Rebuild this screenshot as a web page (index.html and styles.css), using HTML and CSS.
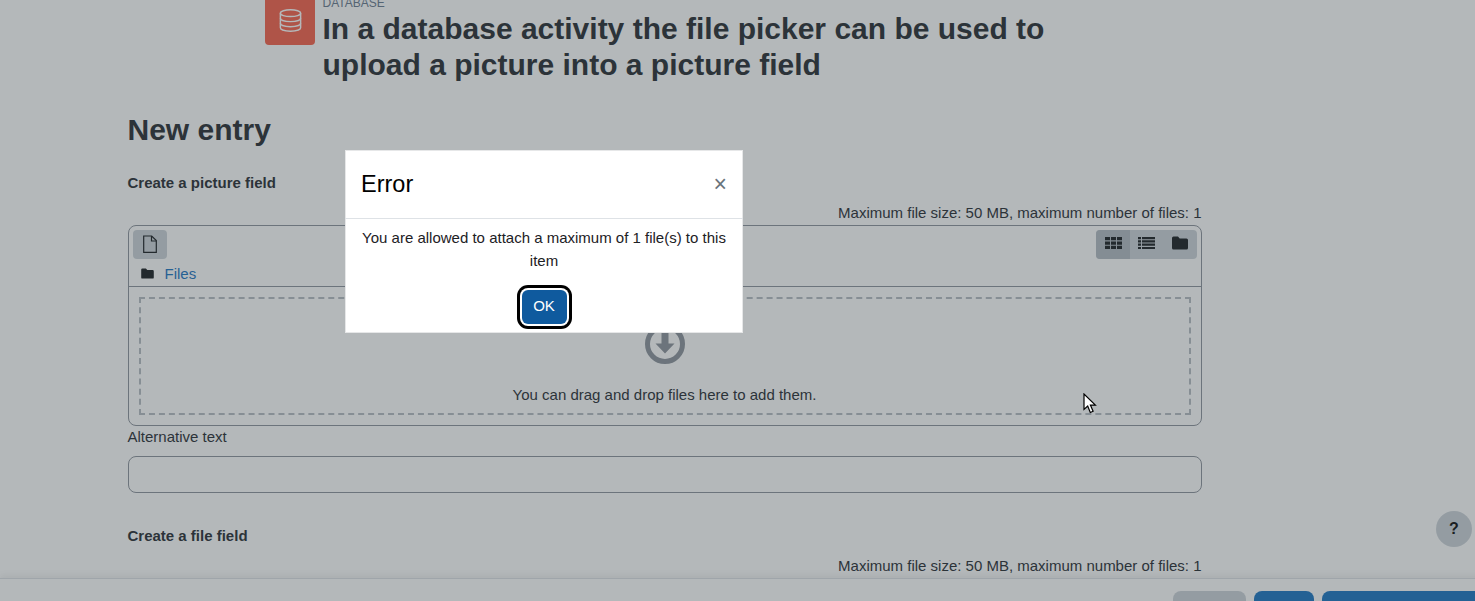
FILE: index.html
```html
<!DOCTYPE html>
<html lang="en">
<head>
    <meta charset="UTF-8">
    <title>New entry</title>
    <link rel="stylesheet" href="styles.css">
</head>
<body>

    <div class="pagina">
        <!-- Cabecera de la actividad -->
        <div class="cabecera">
            <div class="icono-actividad">
                <svg width="27" height="27" viewBox="0 0 24 24" fill="none" stroke="#fff" stroke-width="1.3">
                    <ellipse cx="12" cy="5.5" rx="9" ry="3"/>
                    <path d="M3 5.5v13c0 1.7 4 3 9 3s9-1.3 9-3v-13"/>
                    <path d="M3 10c0 1.7 4 3 9 3s9-1.3 9-3"/>
                    <path d="M3 14.5c0 1.7 4 3 9 3s9-1.3 9-3"/>
                </svg>
            </div>
            <div>
                <div class="tipo-actividad">DATABASE</div>
                <h1>In a database activity the file picker can be used to upload a picture into a picture field</h1>
            </div>
        </div>

        <h2>New entry</h2>

        <div class="campo-titulo">Create a picture field</div>
        <div class="limite">Maximum file size: 50 MB, maximum number of files: 1</div>

        <div class="gestor">
            <div class="barra">
                <button class="boton-gris">
                    <svg width="16" height="18" viewBox="0 0 16 18" fill="none" stroke="#1d2125" stroke-width="1.2">
                        <path d="M1.7 1h8l4.6 4.6v11.700h-12.600z"/>
                        <path d="M9.500 1v5h4.800"/>
                    </svg>
                </button>
                <div class="vistas">
                    <button class="vista activa">
                        <svg width="17" height="14" viewBox="0 0 17 14" fill="#1d2125">
                            <path d="M0 1h5v3.300h-5zM6 1h5v3.300h-5zM12 1h5v3.300h-5zM0 5.400h5v3.300h-5zM6 5.400h5v3.300h-5zM12 5.400h5v3.300h-5zM0 9.800h5v3.300h-5zM6 9.800h5v3.300h-5zM12 9.800h5v3.300h-5z"/>
                        </svg>
                    </button>
                    <button class="vista">
                        <svg width="17" height="14" viewBox="0 0 17 14" fill="#1d2125">
                            <path d="M0 1h3v2.200h-3zM4 1h13v2.200h-13zM0 4.300h3v2.200h-3zM4 4.300h13v2.200h-13zM0 7.600h3v2.200h-3zM4 7.600h13v2.200h-13zM0 10.900h3v2.200h-3zM4 10.900h13v2.200h-13z"/>
                        </svg>
                    </button>
                    <button class="vista">
                        <svg width="16" height="14" viewBox="0 0 16 14" fill="#1d2125">
                            <path d="M1.500 0.500h4.500l1.700 2h6.800q1.500 0 1.500 1.500v8q0 1.500-1.500 1.500h-13q-1.500 0-1.500-1.500v-10q0-1.500 1.500-1.500z"/>
                        </svg>
                    </button>
                </div>
            </div>
            <div class="ruta">
                <svg width="13" height="11" viewBox="0 0 16 14" fill="#1d2125">
                    <path d="M1.500 0.500h4.500l1.700 2h6.800q1.500 0 1.500 1.500v8q0 1.500-1.500 1.500h-13q-1.500 0-1.500-1.500v-10q0-1.500 1.500-1.500z"/>
                </svg>
                <a href="#">Files</a>
            </div>
            <div class="zona-soltar">
                <svg width="40" height="40" viewBox="0 0 40 40">
                    <circle cx="20" cy="20" r="17.500" fill="none" stroke="#8f959e" stroke-width="5"/>
                    <path d="M16.500 9h7v10.500h6l-9.500 10-9.500-10h6z" fill="#8f959e"/>
                </svg>
                <div>You can drag and drop files here to add them.</div>
            </div>
        </div>

        <label class="etiqueta">Alternative text</label>
        <input class="entrada" type="text">

        <div class="campo-titulo segundo">Create a file field</div>
        <div class="limite">Maximum file size: 50 MB, maximum number of files: 1</div>
    </div>

    <!-- Pie fijo con los botones -->
    <div class="pie">
        <span class="boton-pie cancelar"></span>
        <span class="boton-pie guardar"></span>
        <span class="boton-pie guardar-ver"></span>
    </div>

    <button class="ayuda">?</button>

    <div class="fondo-modal"></div>

    <!-- Ventana de error -->
    <div class="modal">
        <div class="modal-cabecera">
            <span class="modal-titulo">Error</span>
            <span class="cerrar">×</span>
        </div>
        <div class="modal-cuerpo">
            <p>You are allowed to attach a maximum of 1 file(s) to this item</p>
            <button class="boton-ok">OK</button>
        </div>
    </div>

    <svg class="cursor" width="14" height="21" viewBox="0 0 14 21">
        <path d="M1 1v15.500l3.700-3.400 2.600 6.400 2.800-1.200-2.700-6.200h5z" fill="#fff" stroke="#000" stroke-width="1.200"/>
    </svg>

</body>
</html>
```

FILE: styles.css
```css
html, body {
    height: 100%;
    overflow: hidden;
}
body {
    margin: 0;
    font-family: "Liberation Sans", Arial, sans-serif;
    font-size: 15px;
    line-height: 23px;
    color: #2b3036;
    background-color: white;
}
button {
    font-family: inherit;
    border: none;
    cursor: pointer;
}
.pagina {
    width: 1074px;
    margin-left: 127.5px;
    margin-top: -5px;
}
.cabecera {
    display: flex;
    gap: 7.5px;
    margin-left: 137.5px;
    width: 800px;
}
.icono-actividad {
    flex: none;
    width: 50px;
    height: 50px;
    background-color: #f7634d;
    border-radius: 4px;
    display: flex;
    justify-content: center;
    align-items: center;
}
.tipo-actividad {
    font-size: 12px;
    line-height: 16px;
    color: #6b7c90;
}
h1 {
    margin: 0;
    font-size: 30px;
    line-height: 36px;
}
h2 {
    margin: 29px 0 0 0;
    font-size: 30px;
    line-height: 36px;
}
.campo-titulo {
    font-weight: bold;
    margin-top: 23px;
}
.campo-titulo.segundo {
    margin-top: 31px;
}
.limite {
    text-align: right;
    margin-top: 7px;
}
.gestor {
    box-sizing: border-box;
    height: 201px;
    margin-top: 1px;
    border: 1px solid #8f959e;
    border-radius: 8px;
    display: flex;
    flex-direction: column;
}
.barra {
    display: flex;
    justify-content: space-between;
    padding: 4px 4px 0 4px;
}
.boton-gris {
    width: 34px;
    height: 29px;
    background-color: #ced4da;
    border-radius: 4px;
    padding: 0 0 2px 0;
    display: flex;
    justify-content: center;
    align-items: center;
}
.vistas {
    display: flex;
    background-color: #ced4da;
    border-radius: 4px;
    overflow: hidden;
    height: 29px;
}
.vista {
    width: 33.4px;
    padding: 0 0 4px 0;
    background: none;
    display: flex;
    justify-content: center;
    align-items: center;
}
.vista.activa {
    background-color: #b5bcc4;
}
.ruta {
    box-sizing: border-box;
    display: flex;
    align-items: center;
    gap: 11px;
    height: 28px;
    padding: 2px 0 0 12px;
    border-bottom: 1px solid #8f959e;
}
a {
    color: #1f77c4;
    text-decoration: none;
}
.zona-soltar {
    box-sizing: border-box;
    height: 118px;
    margin: 10px 10px 0 10px;
    border: 2px dashed #b8bdc4;
    display: flex;
    flex-direction: column;
    align-items: center;
    padding-top: 25px;
    gap: 19px;
}
.zona-soltar svg {
    display: block;
}
.etiqueta {
    display: block;
    line-height: 21px;
}
.entrada {
    display: block;
    box-sizing: border-box;
    width: 100%;
    height: 37px;
    margin-top: 9px;
    border: 1px solid #8f959e;
    border-radius: 8px;
    background: white;
}
.pie {
    position: fixed;
    left: 0;
    right: -60px;
    bottom: 0;
    height: 23px;
    box-sizing: border-box;
    padding-top: 12px;
    background-color: white;
    border-top: 1px solid #dee2e6;
    box-shadow: 0 -3px 6px rgba(0, 0, 0, 0.06);
    display: flex;
    justify-content: flex-end;
    gap: 8px;
}
.boton-pie {
    height: 30px;
    border-radius: 8px;
}
.cancelar {
    width: 73px;
    background-color: #ced4da;
}
.guardar {
    width: 60px;
    background-color: #1f77c4;
}
.guardar-ver {
    width: 213px;
    background-color: #1f77c4;
}
.ayuda {
    position: fixed;
    left: 1436px;
    top: 511px;
    width: 36px;
    height: 36px;
    padding: 0;
    border-radius: 50%;
    background-color: #ced4da;
    color: #111;
    font-size: 16px;
    font-weight: bold;
}
.fondo-modal {
    position: fixed;
    inset: 0;
    background-color: rgba(47, 58, 63, 0.36);
}
.modal {
    position: fixed;
    left: 345px;
    top: 150px;
    width: 398px;
    height: 183px;
    background-color: white;
    box-shadow: inset 0 0 0 1px #e6e7e8;
    color: #1d2125;
}
.modal-cabecera {
    display: flex;
    justify-content: space-between;
    align-items: center;
    box-sizing: border-box;
    height: 69px;
    padding: 0 16px;
    border-bottom: 1px solid #dee2e6;
}
.modal-titulo {
    font-size: 23.5px;
    color: black;
}
.cerrar {
    font-size: 23px;
    color: #6a737b;
}
.modal-cuerpo {
    text-align: center;
    padding: 7px 16px 0 16px;
}
.modal-cuerpo p {
    margin: 0 0 18px 0;
}
.boton-ok {
    width: 45px;
    height: 34px;
    padding: 0 0 3px 0;
    background-color: #0f5a9e;
    color: white;
    font-size: 15px;
    border-radius: 6px;
    box-shadow: 0 0 0 2px white, 0 0 0 5px black;
    display: block;
    margin: 0 auto;
}
.cursor {
    position: fixed;
    left: 1083px;
    top: 393px;
}
```
